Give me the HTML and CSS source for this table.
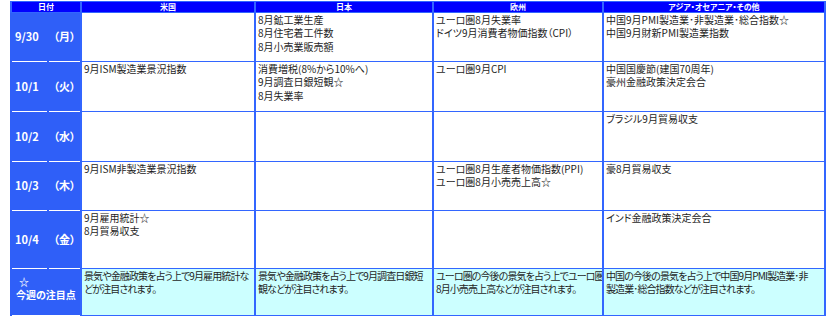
FILE: index.html
```html
<!DOCTYPE html>
<html lang="ja">
<head>
<meta charset="utf-8">
<title>今週の主な経済指標</title>
<link rel="stylesheet" href="styles.css">
</head>
<body>
<div class="wrap">
<table class="cal">
  <colgroup>
    <col class="c-date"><col class="c-wd"><col class="c-us"><col class="c-jp"><col class="c-eu"><col class="c-as">
  </colgroup>
  <thead>
    <tr class="head">
      <th colspan="2">日付</th>
      <th>米国</th>
      <th>日本</th>
      <th>欧州</th>
      <th>アジア・オセアニア・その他</th>
    </tr>
  </thead>
  <tbody>
    <tr class="r r1">
      <td class="date">9/30</td><td class="wd">（月）</td>
      <td></td>
      <td>8月鉱工業生産<br>8月住宅着工件数<br>8月小売業販売額</td>
      <td>ユーロ圏8月失業率<br>ドイツ9月消費者物価指数（CPI）</td>
      <td>中国9月PMI製造業･非製造業･総合指数☆<br>中国9月財新PMI製造業指数</td>
    </tr>
    <tr class="r r2">
      <td class="date">10/1</td><td class="wd">（火）</td>
      <td>9月ISM製造業景況指数</td>
      <td>消費増税(8%から10%へ)<br>9月調査日銀短観☆<br>8月失業率</td>
      <td>ユーロ圏9月CPI</td>
      <td>中国国慶節(建国70周年)<br>豪州金融政策決定会合</td>
    </tr>
    <tr class="r r3">
      <td class="date">10/2</td><td class="wd">（水）</td>
      <td></td>
      <td></td>
      <td></td>
      <td>ブラジル9月貿易収支</td>
    </tr>
    <tr class="r r4">
      <td class="date">10/3</td><td class="wd">（木）</td>
      <td>9月ISM非製造業景況指数</td>
      <td></td>
      <td>ユーロ圏8月生産者物価指数(PPI)<br>ユーロ圏8月小売売上高☆</td>
      <td>豪8月貿易収支</td>
    </tr>
    <tr class="r r5">
      <td class="date">10/4</td><td class="wd">（金）</td>
      <td>9月雇用統計☆<br>8月貿易収支</td>
      <td></td>
      <td></td>
      <td>インド金融政策決定会合</td>
    </tr>
    <tr class="r r6 focus">
      <td class="label" colspan="2"><span class="lb star">☆</span><span class="lb">今週の注目点</span></td>
      <td><span class="ln">景気や金融政策を占う上で9月雇用統計な</span><br><span class="ln">どが注目されます。</span></td>
      <td><span class="ln">景気や金融政策を占う上で9月調査日銀短</span><br><span class="ln">観などが注目されます。</span></td>
      <td><span class="ln">ユーロ圏の今後の景気を占う上でユーロ圏</span><br><span class="ln">8月小売売上高などが注目されます。</span></td>
      <td><span class="ln">中国の今後の景気を占う上で中国9月PMI製造業･非</span><br><span class="ln">製造業･総合指数などが注目されます。</span></td>
    </tr>
  </tbody>
</table>
<p class="note">（注）☆は特に注目度の高い指標。日付は現地時間。各種資料より作成</p>
</div>
</body>
</html>
```
FILE: styles.css
```css
html, body {
  margin: 0;
  padding: 0;
  background: #ffffff;
}

.wrap {
  padding: 1px 0 0 10px;
  font-family: "Noto Sans CJK JP", "Noto Sans", sans-serif;
  font-feature-settings: "palt";
}

.cal {
  border-collapse: collapse;
  table-layout: fixed;
  width: 814px;
}

.c-date { width: 37px; }
.c-wd { width: 33px; }
.c-us { width: 174px; }
.c-jp { width: 178px; }
.c-eu { width: 170px; }
.c-as { width: 222px; }

.cal th,
.cal td {
  border: 1px solid #3366ff;
  border-left-width: 2px;
  border-right-width: 2px;
  padding: 0 1px 0 2px;
  vertical-align: top;
  font-size: 10px;
  line-height: 13.3px;
  color: #1e1e1e;
  text-align: left;
  overflow: hidden;
}

.head th {
  background: #0000ff;
  color: #ffffff;
  font-size: 8px;
  font-weight: bold;
  line-height: 10px;
  height: 10px;
  text-align: center;
  vertical-align: middle;
  padding: 0;
}

.r1 td { height: 48px; }
.r2 td { height: 49px; }
.r3 td { height: 49px; }
.r4 td { height: 48px; }
.r5 td { height: 57px; }
.r6 td { height: 46px; }

.cal td.date,
.cal td.wd,
.cal td.label {
  background: #2f5ff8;
  color: #ffffff;
  font-weight: bold;
  vertical-align: middle;
  border-top-color: #ffffff;
  border-bottom-color: #ffffff;
  border-left-color: #2f5ff8;
}

.cal td.date {
  font-size: 11px;
  padding-left: 3px;
  border-right-color: #2f5ff8;
}

.cal td.wd {
  font-size: 11px;
  text-align: center;
  padding: 0;
}

.r6 td.label {
  font-size: 10px;
  height: 38px;
  padding: 0 0 8px 4px;
}

.lb {
  display: block;
  height: 13px;
  line-height: 13px;
  white-space: nowrap;
}

.star {
  padding-left: 3px;
}

.focus td {
  background: #ccffff;
}

.ln {
  white-space: nowrap;
  letter-spacing: -0.9px;
}

.note {
  margin: 4px 0 0 70px;
  font-size: 11px;
  line-height: 14px;
  color: #889988;
}
```
